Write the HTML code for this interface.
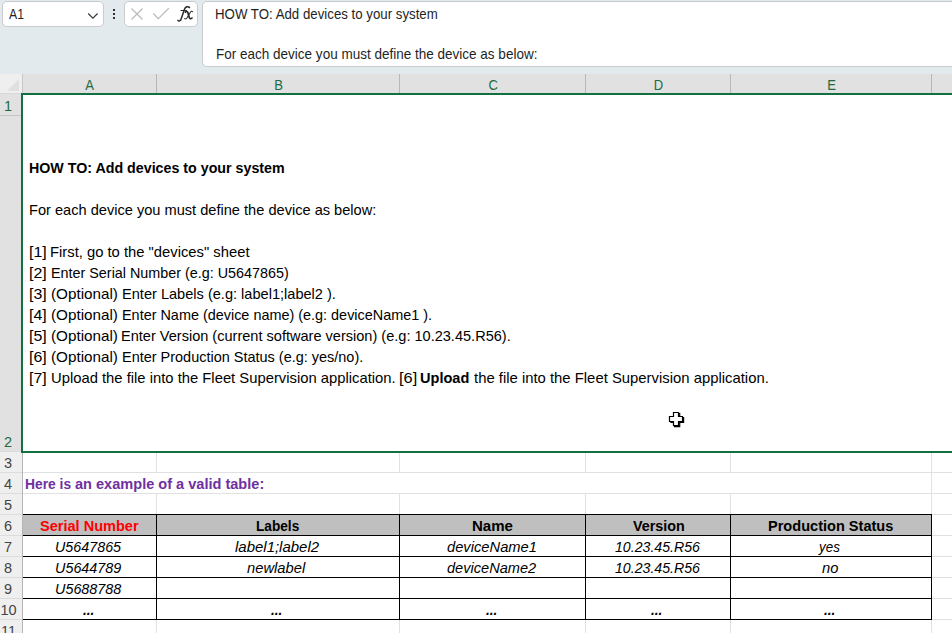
<!DOCTYPE html>
<html>
<head>
<meta charset="utf-8">
<title>Excel</title>
<style>
html,body{margin:0;padding:0;}
body{width:952px;height:633px;overflow:hidden;background:#fff;position:relative;font-family:"Liberation Sans",sans-serif;color:#000;}
.abs{position:absolute;}
#topbar{left:0;top:0;width:952px;height:74px;background:#e2eaed;}
.box{background:#fff;border:1px solid #c9cbcc;border-radius:5px;box-sizing:border-box;}
#namebox{left:2px;top:1px;width:102px;height:26px;}
#btns{left:124px;top:1px;width:74px;height:26px;}
#fbar{left:202px;top:1px;width:760px;height:66px;}
.t{position:absolute;white-space:nowrap;transform-origin:0 50%;line-height:20px;height:20px;transform:scaleX(var(--s,1));}
.ui{font-size:14.4px;color:#1f1f1f;--s:0.9;}
/* headers */
#colhdr{left:0;top:74px;width:952px;height:19px;background:#e1e1e1;}
#corner{left:0;top:74px;width:22px;height:19px;background:#efefef;}
#rowhdr{left:0;top:93px;width:22px;height:540px;background:#efefef;}
#rowsel{left:0;top:94px;width:22px;height:358px;background:#e1e1e1;}
.ch{position:absolute;top:76px;height:18px;line-height:18px;font-size:14.5px;color:#1e6b41;text-align:center;transform:translateX(0.6px) scaleX(0.9);}
.cs{position:absolute;top:74px;width:1px;height:19px;background:#b8b8b8;}
.rh{position:absolute;left:0;width:16px;height:20px;line-height:20px;font-size:14.5px;color:#444;text-align:center;}
.rh.sel{color:#1e6b41;}
.rs{position:absolute;left:0;width:22px;height:1px;background:#dcdcdc;}
/* grid */
.gh{position:absolute;height:1px;background:#e1e1e1;left:23px;width:929px;}
.gv{position:absolute;width:1px;background:#e1e1e1;}
.bh{position:absolute;height:1px;background:#000;}
.bv{position:absolute;width:1px;background:#000;}
.c{font-size:14.2px;--s:1.03;}
.b{font-weight:bold;}
.i{font-style:italic;}
.ctr{transform-origin:50% 50%;text-align:center;}
</style>
</head>
<body>
<!-- top formula area -->
<div id="topbar" class="abs"></div>
<div id="namebox" class="abs box"></div>
<div class="t ui" id="nb" style="left:8.63px;top:4px;--s:0.8493;">A1</div>
<svg class="abs" style="left:87px;top:11.5px;" width="12" height="8" viewBox="0 0 12 8"><path d="M1.2 1.5 L5.9 6.2 L10.6 1.5" fill="none" stroke="#333" stroke-width="1.1"/></svg>
<div class="abs" style="left:113px;top:9px;width:2px;height:2px;background:#333;"></div>
<div class="abs" style="left:113px;top:13px;width:2px;height:2px;background:#333;"></div>
<div class="abs" style="left:113px;top:17px;width:2px;height:2px;background:#333;"></div>
<div id="btns" class="abs box"></div>
<svg class="abs" style="left:130px;top:7px;" width="14" height="14" viewBox="0 0 14 14"><path d="M1.5 1.5 L12.5 12.5 M12.5 1.5 L1.5 12.5" fill="none" stroke="#b9b9b9" stroke-width="1.2"/></svg>
<svg class="abs" style="left:152px;top:7px;" width="18" height="14" viewBox="0 0 18 14"><path d="M1.3 6.5 L6.3 11.7 L16.8 1.3" fill="none" stroke="#b9b9b9" stroke-width="1.2"/></svg>
<svg class="abs" style="left:176px;top:4px;" width="18" height="20" viewBox="0 0 18 20"><g fill="none" stroke="#2b2b2b" stroke-linecap="round">
<path d="M1.9 16.3 C2.7 17.5 4.5 17.3 5.3 14.5 L8.5 5.2 C9.3 2.7 12.1 2 13.5 3.4" stroke-width="1.5"/>
<path d="M5 6.5 H10.4" stroke-width="1.2"/>
<path d="M9.4 8.1 C10.4 7 11.5 7.3 11.9 8.7 L13.2 13.3 C13.6 14.8 14.7 15.3 16 14" stroke-width="1.7"/>
<path d="M8.7 14.5 C9.3 15.3 10.1 15.1 10.9 14 L14.4 8.3 C15.2 7.1 16 6.9 16.5 7.7" stroke-width="1.1"/>
</g></svg>
<div id="fbar" class="abs box"></div>
<div class="t ui" id="f1" style="left:215.28px;top:4px;--s:0.9213;">HOW TO: Add devices to your system</div>
<div class="t ui" id="f2" style="left:215.83px;top:44px;--s:0.9388;">For each device you must define the device as below:</div>

<!-- headers -->
<div id="colhdr" class="abs"></div>
<div id="corner" class="abs"></div>
<svg class="abs" style="left:6px;top:78px;" width="14" height="14" viewBox="0 0 14 14"><path d="M13 1 L13 13 L1 13 Z" fill="#e0e0e0"/></svg>
<div id="rowhdr" class="abs"></div>
<div id="rowsel" class="abs"></div>
<div class="abs" style="left:0;top:93px;width:22px;height:1px;background:#d8d8d8;"></div>
<div class="cs" style="left:22px;background:#c6c6c6;"></div>
<div class="cs" style="left:156px;"></div>
<div class="cs" style="left:399px;"></div>
<div class="cs" style="left:585px;"></div>
<div class="cs" style="left:730px;"></div>
<div class="cs" style="left:931px;"></div>
<div class="ch" style="left:22px;width:134px;">A</div>
<div class="ch" style="left:157px;width:242px;">B</div>
<div class="ch" style="left:400px;width:185px;">C</div>
<div class="ch" style="left:586px;width:144px;">D</div>
<div class="ch" style="left:731px;width:200px;">E</div>

<div class="rh sel" style="top:96px;">1</div>
<div class="rh sel" style="top:432px;">2</div>
<div class="rh" style="top:453px;">3</div>
<div class="rh" style="top:474px;">4</div>
<div class="rh" style="top:495px;">5</div>
<div class="rh" style="top:516px;">6</div>
<div class="rh" style="top:537px;">7</div>
<div class="rh" style="top:558px;">8</div>
<div class="rh" style="top:579px;">9</div>
<div class="rh" style="top:600px;width:17px;">10</div>
<div class="rh" style="top:621px;width:17px;">11</div>
<div class="rs" style="top:115px;background:#c4c4c4;"></div>
<div class="rs" style="top:451px;"></div>
<div class="rs" style="top:472px;"></div>
<div class="rs" style="top:493px;"></div>
<div class="rs" style="top:514px;"></div>
<div class="rs" style="top:535px;"></div>
<div class="rs" style="top:556px;"></div>
<div class="rs" style="top:577px;"></div>
<div class="rs" style="top:598px;"></div>
<div class="rs" style="top:619px;"></div>
<div class="abs" style="left:22px;top:93px;width:1px;height:540px;background:#b4b4b4;"></div>

<!-- gridlines -->
<div class="gh" style="top:472px;"></div>
<div class="gh" style="top:493px;"></div>
<div class="gh" style="top:514px;"></div>
<div class="gh" style="top:535px;"></div>
<div class="gh" style="top:556px;"></div>
<div class="gh" style="top:577px;"></div>
<div class="gh" style="top:598px;"></div>
<div class="gh" style="top:619px;"></div>
<!-- vertical gridlines rows 3,5,11 (row 4 text overflows) -->
<div class="gv" style="left:156px;top:452px;height:20px;"></div>
<div class="gv" style="left:399px;top:452px;height:20px;"></div>
<div class="gv" style="left:585px;top:452px;height:20px;"></div>
<div class="gv" style="left:730px;top:452px;height:20px;"></div>
<div class="gv" style="left:156px;top:494px;height:20px;"></div>
<div class="gv" style="left:399px;top:494px;height:20px;"></div>
<div class="gv" style="left:585px;top:494px;height:20px;"></div>
<div class="gv" style="left:730px;top:494px;height:20px;"></div>
<div class="gv" style="left:931px;top:452px;height:181px;"></div>
<div class="gv" style="left:156px;top:620px;height:13px;"></div>
<div class="gv" style="left:399px;top:620px;height:13px;"></div>
<div class="gv" style="left:585px;top:620px;height:13px;"></div>
<div class="gv" style="left:730px;top:620px;height:13px;"></div>

<!-- table -->
<div class="abs" style="left:23px;top:515px;width:908px;height:20px;background:#bfbfbf;"></div>
<div class="bh" style="left:23px;top:514px;width:909px;"></div>
<div class="bh" style="left:23px;top:535px;width:909px;"></div>
<div class="bh" style="left:23px;top:556px;width:909px;"></div>
<div class="bh" style="left:23px;top:577px;width:909px;"></div>
<div class="bh" style="left:23px;top:598px;width:909px;"></div>
<div class="bh" style="left:23px;top:619px;width:909px;"></div>
<div class="bv" style="left:156px;top:514px;height:106px;"></div>
<div class="bv" style="left:399px;top:514px;height:106px;"></div>
<div class="bv" style="left:585px;top:514px;height:106px;"></div>
<div class="bv" style="left:730px;top:514px;height:106px;"></div>
<div class="bv" style="left:931px;top:514px;height:106px;"></div>

<!-- selection -->
<div class="abs" style="left:21px;top:93px;width:935px;height:356px;border:2px solid #127040;"></div>

<!-- merged cell text -->
<div class="t c b" id="l0" style="left:29.34px;top:158px;--s:1.0039;">HOW TO: Add devices to your system</div>
<div class="t c" id="l1" style="left:28.82px;top:200px;--s:1.0290;">For each device you must define the device as below:</div>
<div class="t c" id="l2a" style="left:28.99px;top:242px;--s:1.1218;">[1]</div>
<div class="t c" id="l2b" style="left:50.47px;top:242px;--s:1.0420;">First, go to the &quot;devices&quot; sheet</div>
<div class="t c" id="l3a" style="left:28.99px;top:263px;--s:1.1218;">[2]</div>
<div class="t c" id="l3b" style="left:50.88px;top:263px;--s:1.0117;">Enter Serial Number (e.g: U5647865)</div>
<div class="t c" id="l4a" style="left:28.99px;top:284px;--s:1.1218;">[3]</div>
<div class="t c" id="l4b" style="left:50.62px;top:284px;--s:1.0747;">(Optional)</div>
<div class="t c" id="l4c" style="left:121.78px;top:284px;--s:1.0274;">Enter Labels (e.g: label1;label2 ).</div>
<div class="t c" id="l5a" style="left:28.99px;top:305px;--s:1.1218;">[4]</div>
<div class="t c" id="l5b" style="left:50.62px;top:305px;--s:1.0747;">(Optional)</div>
<div class="t c" id="l5c" style="left:121.77px;top:305px;--s:1.0160;">Enter Name (device name) (e.g: deviceName1 ).</div>
<div class="t c" id="l6a" style="left:28.99px;top:326px;--s:1.1218;">[5]</div>
<div class="t c" id="l6b" style="left:50.62px;top:326px;--s:1.0747;">(Optional)</div>
<div class="t c" id="l6c" style="left:121.30px;top:326px;--s:1.0253;">Enter Version (current software version) (e.g: 10.23.45.R56).</div>
<div class="t c" id="l7a" style="left:28.99px;top:347px;--s:1.1218;">[6]</div>
<div class="t c" id="l7b" style="left:50.62px;top:347px;--s:1.0747;">(Optional)</div>
<div class="t c" id="l7c" style="left:121.91px;top:347px;--s:1.0197;">Enter Production Status (e.g: yes/no).</div>
<div class="t c" id="l8a" style="left:28.99px;top:368px;--s:1.1218;">[7]</div>
<div class="t c" id="l8b" style="left:51.03px;top:368px;--s:1.0428;">Upload the file into the Fleet Supervision application.</div>
<div class="t c" id="l8c" style="left:399.02px;top:368px;--s:1.1528;">[6]</div>
<div class="t c b" id="l8d" style="left:420.47px;top:368px;--s:1.0256;">Upload</div>
<div class="t c" id="l8e" style="left:474.30px;top:368px;--s:1.0470;">the file into the Fleet Supervision application.</div>

<div class="t c b" id="r4a" style="left:24.65px;top:474px;color:#7030a0;--s:0.9738;">Here is</div>
<div class="t c b" id="r4b" style="left:74.79px;top:474px;color:#7030a0;--s:1.0257;">an example of a valid table:</div>

<div class="t c b" id="h1" style="left:39.92px;top:516px;color:#ff0000;--s:1.0252;">Serial Number</div>
<div class="t c b" id="h2" style="left:255.83px;top:516px;--s:0.9618;">Labels</div>
<div class="t c b" id="h3" style="left:472.16px;top:516px;--s:1.0594;">Name</div>
<div class="t c b" id="h4" style="left:632.82px;top:516px;--s:1.0093;">Version</div>
<div class="t c b" id="h5" style="left:768.10px;top:516px;--s:1.0258;">Production Status</div>

<div class="t c i" id="a7" style="left:54.52px;top:537px;--s:1.0091;">U5647865</div>
<div class="t c i" id="b7" style="left:235.19px;top:537px;--s:1.0552;">label1;label2</div>
<div class="t c i" id="c7" style="left:446.92px;top:537px;--s:1.0371;">deviceName1</div>
<div class="t c i" id="d7" style="left:614.66px;top:537px;--s:0.9974;">10.23.45.R56</div>
<div class="t c i" id="e7" style="left:819.40px;top:537px;--s:0.9442;">yes</div>
<div class="t c i" id="a8" style="left:54.51px;top:558px;--s:1.0132;">U5644789</div>
<div class="t c i" id="b8" style="left:247.34px;top:558px;--s:1.0385;">newlabel</div>
<div class="t c i" id="c8" style="left:446.95px;top:558px;--s:1.0272;">deviceName2</div>
<div class="t c i" id="d8" style="left:614.66px;top:558px;--s:0.9974;">10.23.45.R56</div>
<div class="t c i" id="e8" style="left:822.16px;top:558px;--s:1.0351;">no</div>
<div class="t c i" id="a9" style="left:54.51px;top:579px;--s:1.0132;">U5688788</div>
<div class="t c i b" id="a10" style="left:83.4px;top:600px;--s:0.95;">...</div>
<div class="t c i b" id="b10" style="left:271.4px;top:600px;--s:0.95;">...</div>
<div class="t c i b" id="c10" style="left:486.4px;top:600px;--s:0.95;">...</div>
<div class="t c i b" id="d10" style="left:651.4px;top:600px;--s:0.95;">...</div>
<div class="t c i b" id="e10" style="left:824.4px;top:600px;--s:0.95;">...</div>

<!-- cursor -->
<svg class="abs" style="left:668px;top:411px;" width="17" height="17" viewBox="0 0 17 17">
<path d="M5.5 1.5 H10.5 V5.5 H14.5 V10.5 H10.5 V14.5 H5.5 V10.5 H1.5 V5.5 H5.5 Z" fill="#fff" stroke="#000" stroke-width="1.2"/>
<path d="M11 2.5 H11.7 V5 M15 6.5 H15.6 V11.5 H11.7 V15.6 H6.5 V15 M2.3 11.4 H5.5" fill="none" stroke="#000" stroke-width="1.2"/>
</svg>
</body>
</html>
